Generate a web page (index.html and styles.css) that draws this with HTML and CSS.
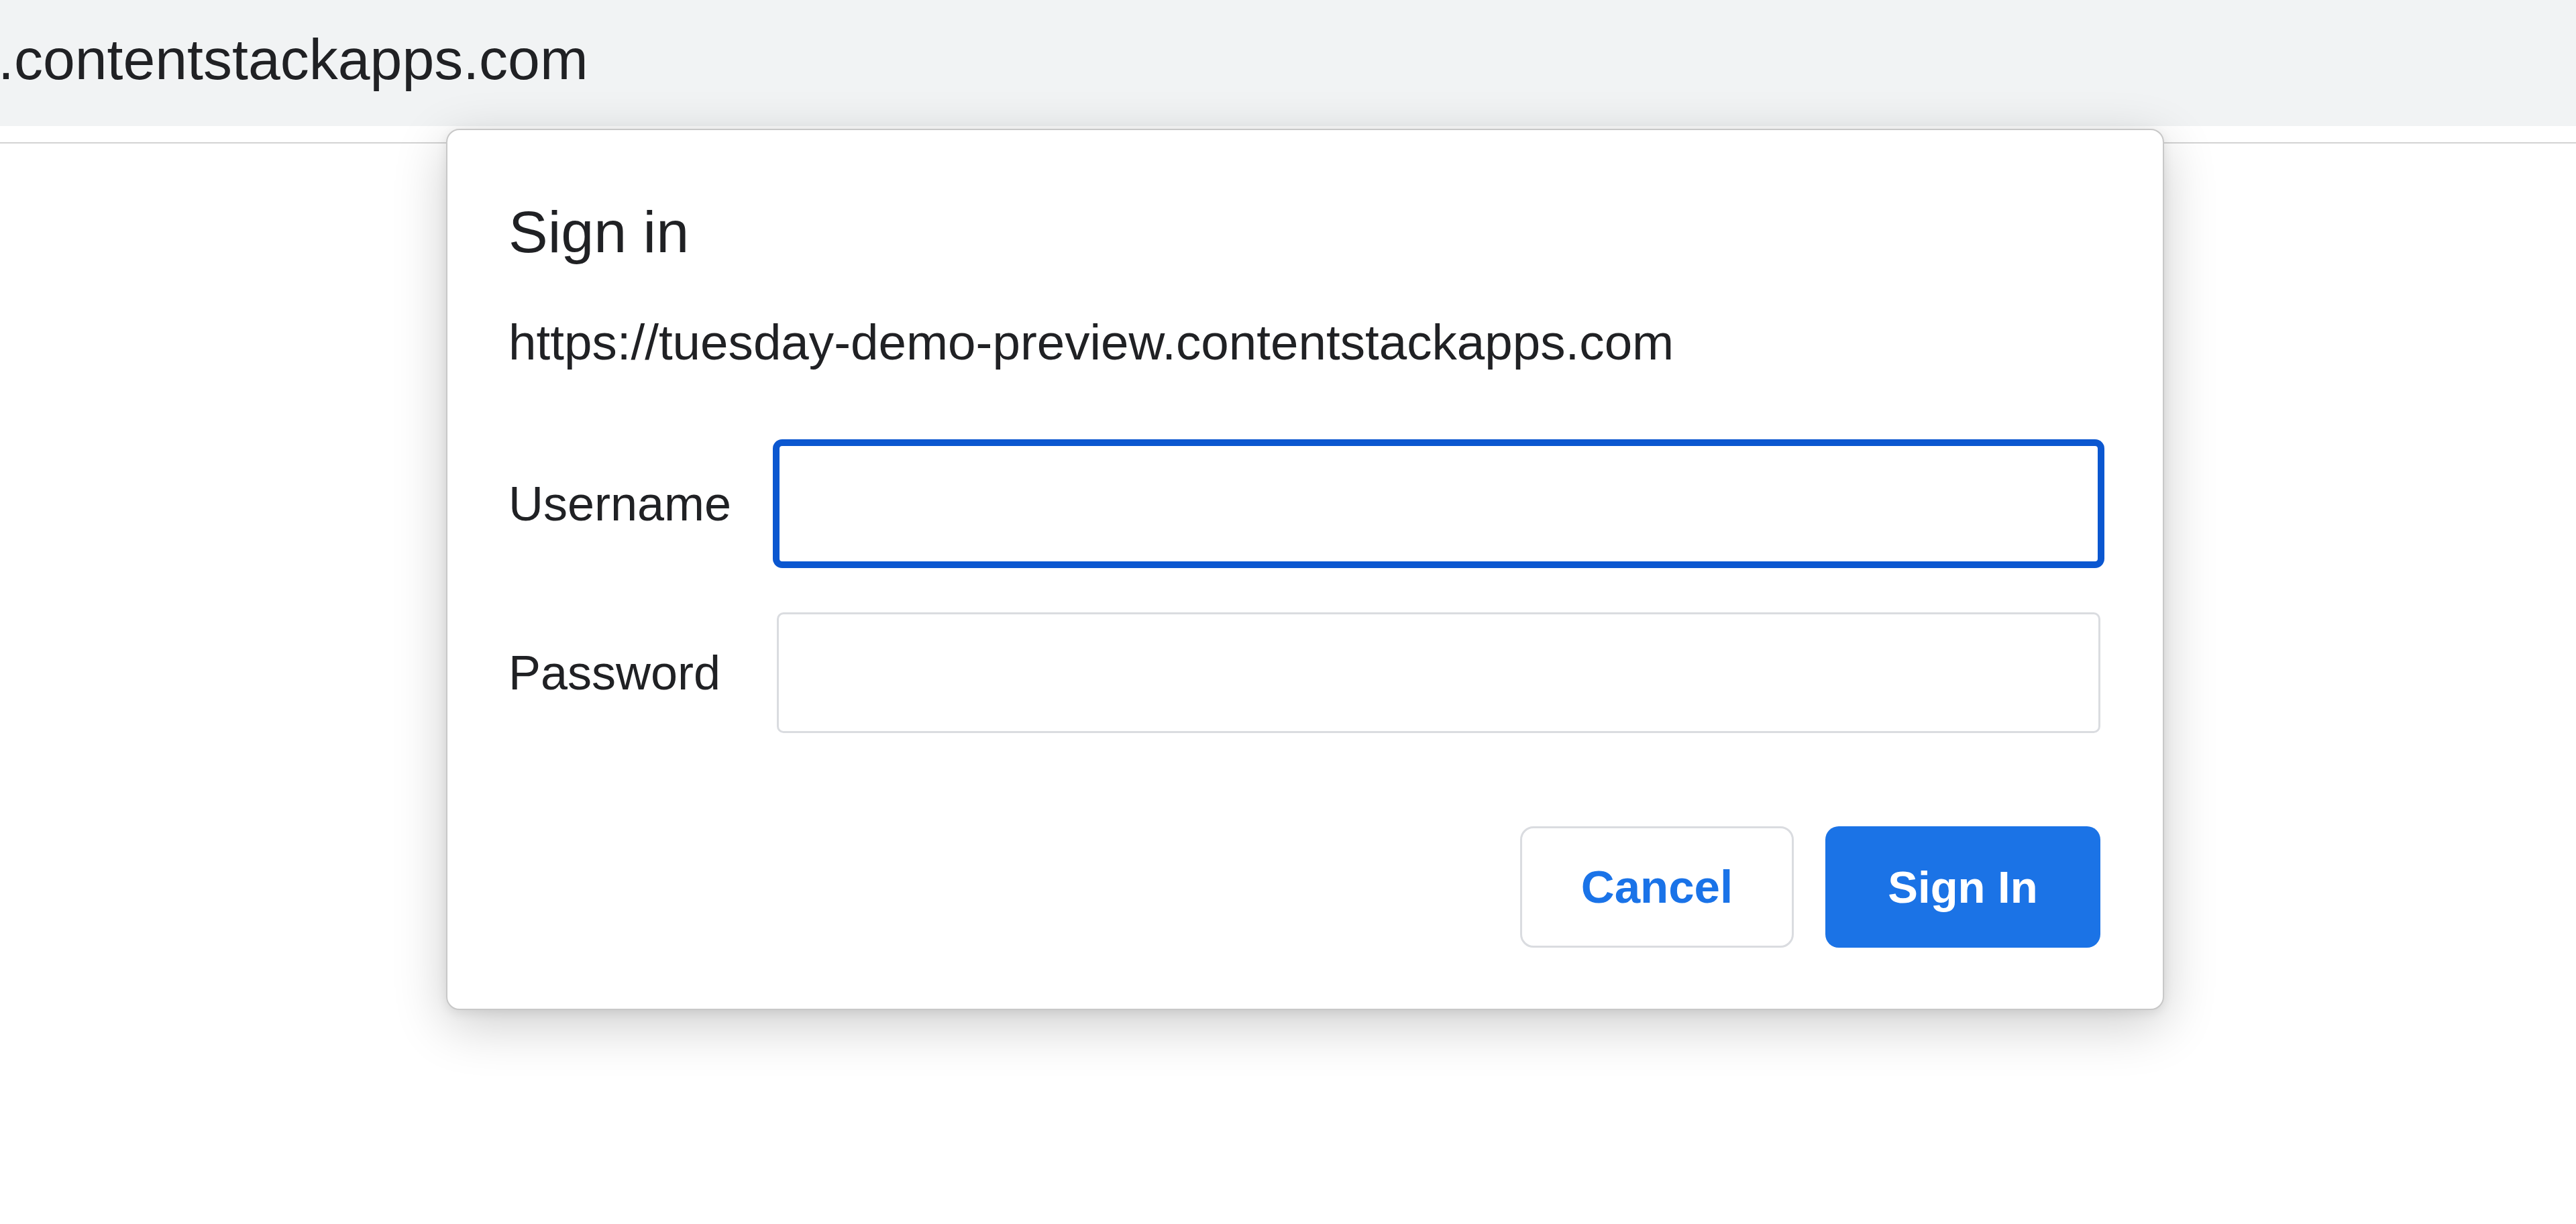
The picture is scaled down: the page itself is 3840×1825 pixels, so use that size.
FILE: index.html
```html
<!DOCTYPE html>
<html lang="en">

<head>
    <meta charset="UTF-8">
    <meta name="viewport" content="width=device-width, initial-scale=1.0">
    <title>Sign in</title>
    <link rel="stylesheet" href="styles.css">
</head>

<body>
    <div id="browser">
        <header class="omnibox">
            <span class="omnibox-url">.contentstackapps.com</span>
        </header>
        <div class="toolbar-edge"></div>
        <main class="page"></main>
    </div>

    <div class="auth-dialog" role="dialog" aria-labelledby="authTitle">
        <h1 id="authTitle" class="auth-title">Sign in</h1>
        <p class="auth-origin">https://tuesday-demo-preview.contentstackapps.com</p>

        <form class="auth-form" name="authForm">
            <label for="username" class="auth-label">Username</label>
            <input type="text" id="username" class="auth-input focused" autocomplete="off">

            <label for="password" class="auth-label">Password</label>
            <input type="password" id="password" class="auth-input">
        </form>

        <div class="auth-actions">
            <button type="button" class="btn btn-cancel">Cancel</button>
            <button type="button" class="btn btn-primary">Sign In</button>
        </div>
    </div>
</body>

</html>
```

FILE: styles.css
```css
* {
    margin: 0;
    padding: 0;
    box-sizing: border-box;
}

html,
body {
    width: 100%;
    height: 100%;
}

body {
    background-color: #ffffff;
    font-family: "Liberation Sans", Arial, Helvetica, sans-serif;
    color: #202124;
    overflow: hidden;
}

/* browser chrome behind the dialog */

.omnibox {
    height: 188px;
    background-color: #f1f3f4;
    padding-top: 45px;
}

.omnibox-url {
    display: block;
    margin-left: -3px;
    font-size: 86px;
    line-height: 86px;
    color: #202124;
    white-space: nowrap;
}

.toolbar-edge {
    height: 26px;
    background-color: #ffffff;
    border-bottom: 2px solid #d3d3d3;
}

.page {
    background-color: #ffffff;
}

/* http auth dialog */

.auth-dialog {
    position: absolute;
    left: 665px;
    top: 192px;
    width: 2561px;
    padding: 108px 93px 91px 91px;
    background-color: #ffffff;
    border: 2px solid #c8c8c8;
    border-radius: 20px;
    box-shadow: 0 22px 80px rgba(0, 0, 0, 0.2), 0 4px 16px rgba(0, 0, 0, 0.08);
}

.auth-title {
    font-size: 88px;
    line-height: 88px;
    font-weight: normal;
    color: #202124;
}

.auth-origin {
    margin-top: 83px;
    font-size: 74.6px;
    line-height: 74px;
    color: #202124;
    white-space: nowrap;
}

.auth-form {
    margin-top: 114px;
    display: grid;
    grid-template-columns: 400px 1fr;
    grid-auto-rows: 180px;
    row-gap: 72px;
    align-items: center;
}

.auth-label {
    font-size: 72px;
    line-height: 72px;
    color: #202124;
}

.auth-input {
    height: 180px;
    width: 100%;
    border: 3px solid #dadce0;
    border-radius: 10px;
    background-color: #ffffff;
    outline: none;
    font-family: inherit;
    font-size: 72px;
    padding: 0 30px;
    color: #202124;
}

.auth-input.focused {
    border: 4px solid #0b57d0;
    box-shadow: 0 0 0 6px #0b57d0;
    border-radius: 8px;
}

.auth-actions {
    margin-top: 139px;
    display: flex;
    justify-content: flex-end;
    gap: 47px;
}

.btn {
    height: 181px;
    border-radius: 20px;
    font-family: inherit;
    font-size: 69px;
    line-height: 70px;
    font-weight: bold;
    display: flex;
    align-items: center;
    justify-content: center;
    cursor: pointer;
}

.btn-cancel {
    width: 408px;
    background-color: #ffffff;
    border: 3px solid #dadce0;
    color: #1a73e8;
}

.btn-primary {
    width: 410px;
    background-color: #1b73e6;
    border: none;
    color: #ffffff;
    font-size: 67px;
}
```
